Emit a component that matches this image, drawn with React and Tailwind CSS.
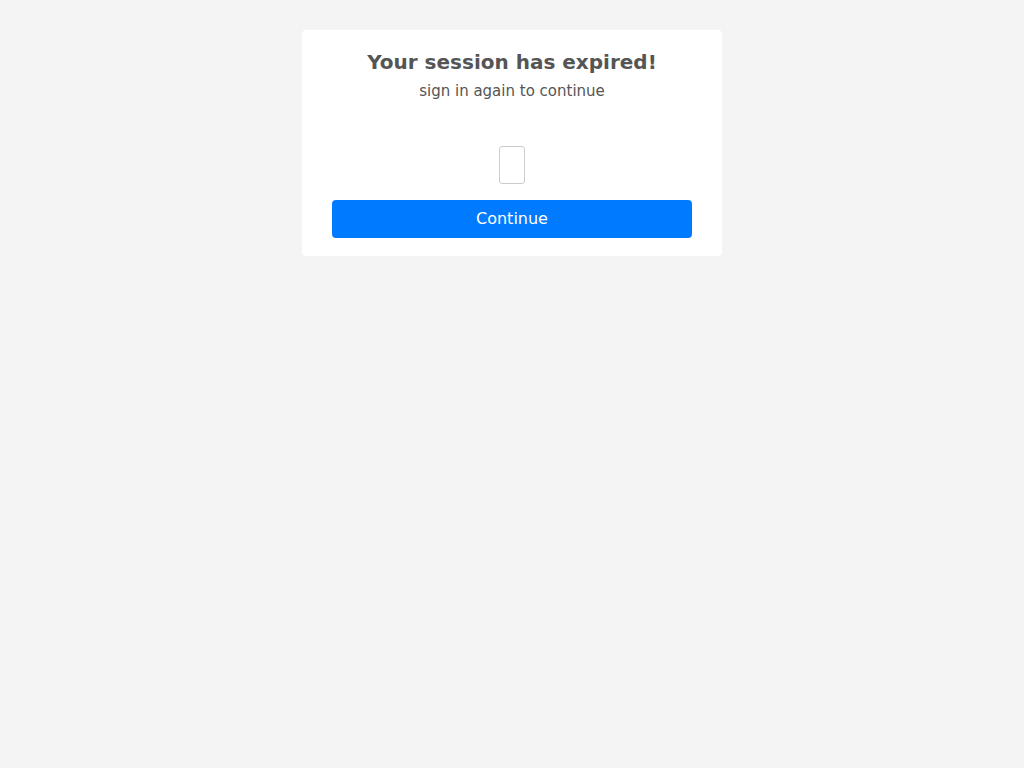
import React from 'react';

const App = () => {
    return (
        <div className="min-h-screen bg-[#f4f4f4] pt-[30px] font-['DejaVu_Sans',sans-serif]">
            <div className="mx-auto w-[420px] rounded bg-white px-[30px] pt-[18px] pb-[18px] text-center text-[#555]">
                <h1 className="text-[20px] font-bold leading-[28px]">Your session has expired!</h1>
                <p className="mt-[4px] text-[15px] leading-[22px]">sign in again to continue</p>
                <div className="mt-[44px] flex justify-center">
                    <div className="h-[38px] w-[26px] rounded-[3px] border border-[#ccc] bg-white" />
                </div>
                <button className="mt-[16px] h-[38px] w-full rounded bg-[#007bff] text-[16px] text-white">
                    Continue
                </button>
            </div>
        </div>
    );
};

export default App;
